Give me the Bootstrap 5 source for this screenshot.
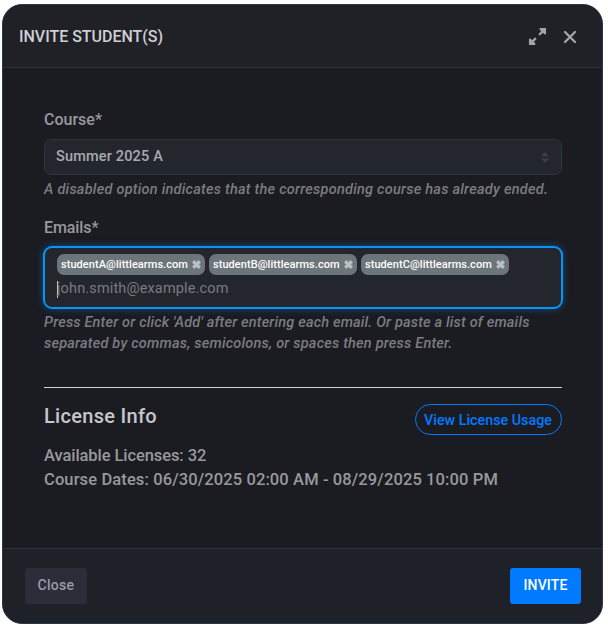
<!DOCTYPE html>
<html lang="en">
<head>
<meta charset="utf-8">
<meta name="viewport" content="width=device-width, initial-scale=1">
<title>Invite Student(s)</title>
<link href="https://cdn.jsdelivr.net/npm/bootstrap@5.3.0/dist/css/bootstrap.min.css" rel="stylesheet">
<style>
body{background:#fff;font-family:Roboto,"Open Sans",sans-serif;color:#98999f;font-weight:500;overflow:hidden}
.invite-dialog{width:601px;height:620px;margin:4px 0 0 2px;background:#1b1b22;border:1px solid #29384a;border-radius:20px;overflow:hidden}
.dialog-head{height:63px;padding:1px 25px 0 16px;background:#1f2127;border-bottom:1px solid #2b323f;color:#cfcfd6}
.dialog-title{font-size:16px;line-height:24px;font-weight:500;letter-spacing:-.02px}
.icon-btn{color:#a3a4a9;line-height:0}
.dialog-main{padding:40px 40px 0 41px}
.field-label{font-size:16px;line-height:24px}
.course-select{height:36px;margin-top:7px;border:1px solid #2b353e;border-radius:7px;background:#23262d;padding:0 12px 0 11px;font-size:14.5px;letter-spacing:.17px;line-height:20px;color:#a9abb0}
.course-name{margin-top:-1px}
.hint{font-size:14.5px;line-height:21px;font-style:italic;color:#7b7c83;white-space:nowrap}
.hint-course{margin-top:4px;letter-spacing:.245px}
.hint-emails{margin-top:3px;letter-spacing:.18px}
.hint-second{letter-spacing:.21px}
.label-emails{margin-top:16px;letter-spacing:-.1px}
.email-box{height:63px;margin:6px -1px 0;border:2px solid #0794f5;border-radius:9px;background:#23262d;box-shadow:0 0 7px #087bd088;padding:6px 12px}
.chip-row{gap:4px}
.chip{height:21px;width:148px;padding:0 4px;border-radius:7px;background:#6c757a;color:#fff;font-size:11px;line-height:20px;letter-spacing:.05px}
.chip-x{color:#b9bfc3}
.email-entry{margin-top:5px;height:18px;font-size:14.5px;line-height:20px;font-weight:400;letter-spacing:.15px;color:#797b80}
.caret{width:1px;height:17px;margin-right:-1px;background:#c9cacd}
.divider{height:1px;margin-top:33px;background:#cfcfd5}
.license-title{font-size:20px;line-height:24px;font-weight:500;letter-spacing:.3px;color:#c6c6ce}
.usage-btn{width:147px;height:31px;padding:0 1px 0 0;border:1px solid #007bff;color:#007bff;font-size:14.3px;line-height:28px;font-weight:500}
.license-facts{margin-top:9px;font-size:16.5px;line-height:24px;white-space:nowrap}
.fact-dates{letter-spacing:.116px}
.fact-count{letter-spacing:-.08px}
.dialog-foot{height:75px;padding:0 21px 1px 22px;background:#1f2128;border-top:1px solid #28323d}
.foot-btn{height:36px;padding:0 0 2px;border:0;border-radius:3px;font-size:14px;line-height:34px;font-weight:500}
.close-btn{width:62px;background:#2b2d39;color:#999ba4;letter-spacing:.3px}
.invite-btn{width:71px;background:#007bff;color:#fff;letter-spacing:.14px}
</style>
</head>
<body>
<main class="invite-dialog d-flex flex-column">
  <header class="dialog-head d-flex align-items-center justify-content-between">
    <h1 class="dialog-title m-0">INVITE STUDENT(S)</h1>
    <div class="d-flex align-items-center gap-3">
      <span class="icon-btn" role="button" aria-label="Expand"><svg width="19" height="19" viewBox="0 0 20 20" fill="none" stroke="currentColor" stroke-width="2.3"><path d="M11.7 8.3l4.5-4.5M8.3 11.7l-4.5 4.5"/><path d="M12.3 1h6.7v6.7h-1.8L12.3 2.8zM1 12.3v6.7h6.7v-1.8L2.8 12.3z" fill="currentColor" stroke="none"/></svg></span>
      <span class="icon-btn" role="button" aria-label="Dismiss"><svg width="14" height="14" viewBox="0 0 14 14" fill="none" stroke="currentColor" stroke-width="2.3" stroke-linecap="round"><path d="M2 2l10 10M12 2L2 12"/></svg></span>
    </div>
  </header>
  <section class="dialog-main flex-grow-1">
    <div class="field-label">Course*</div>
    <div class="course-select d-flex align-items-center justify-content-between">
      <span class="course-name">Summer 2025 A</span>
      <svg width="8" height="11" viewBox="0 0 8 11" fill="#3b3e45"><path d="M4 0l4 4.6H0zM4 11L0 6.4h8z"/></svg>
    </div>
    <div class="hint hint-course">A disabled option indicates that the corresponding course has already ended.</div>
    <div class="field-label label-emails">Emails*</div>
    <div class="email-box">
      <div class="chip-row d-flex">
        <div class="chip d-flex align-items-center justify-content-between"><span>studentA@littlearms.com</span><svg class="chip-x" width="9" height="9" viewBox="0 0 9 9" stroke="currentColor" stroke-width="3.4"><path d="M1.2 1.2l6.6 6.6M7.8 1.2L1.2 7.8"/></svg></div>
        <div class="chip d-flex align-items-center justify-content-between"><span>studentB@littlearms.com</span><svg class="chip-x" width="9" height="9" viewBox="0 0 9 9" stroke="currentColor" stroke-width="3.4"><path d="M1.2 1.2l6.6 6.6M7.8 1.2L1.2 7.8"/></svg></div>
        <div class="chip d-flex align-items-center justify-content-between"><span>studentC@littlearms.com</span><svg class="chip-x" width="9" height="9" viewBox="0 0 9 9" stroke="currentColor" stroke-width="3.4"><path d="M1.2 1.2l6.6 6.6M7.8 1.2L1.2 7.8"/></svg></div>
      </div>
      <div class="email-entry d-flex align-items-center"><span class="caret"></span><span>john.smith@example.com</span></div>
    </div>
    <div class="hint hint-emails">Press Enter or click 'Add' after entering each email. Or paste a list of emails<br><span class="hint-second">separated by commas, semicolons, or spaces then press Enter.</span></div>
    <div class="divider"></div>
    <div class="d-flex align-items-start justify-content-between pt-3">
      <h2 class="license-title m-0">License Info</h2>
      <button type="button" class="btn usage-btn rounded-pill">View License Usage</button>
    </div>
    <div class="license-facts">
      <div class="fact-count">Available Licenses: 32</div>
      <div class="fact-dates">Course Dates: 06/30/2025 02:00 AM - 08/29/2025 10:00 PM</div>
    </div>
  </section>
  <footer class="dialog-foot d-flex align-items-center justify-content-between">
    <button type="button" class="btn foot-btn close-btn">Close</button>
    <button type="button" class="btn foot-btn invite-btn">INVITE</button>
  </footer>
</main>
<script src="https://cdn.jsdelivr.net/npm/bootstrap@5.3.0/dist/js/bootstrap.bundle.min.js"></script>
</body>
</html>
